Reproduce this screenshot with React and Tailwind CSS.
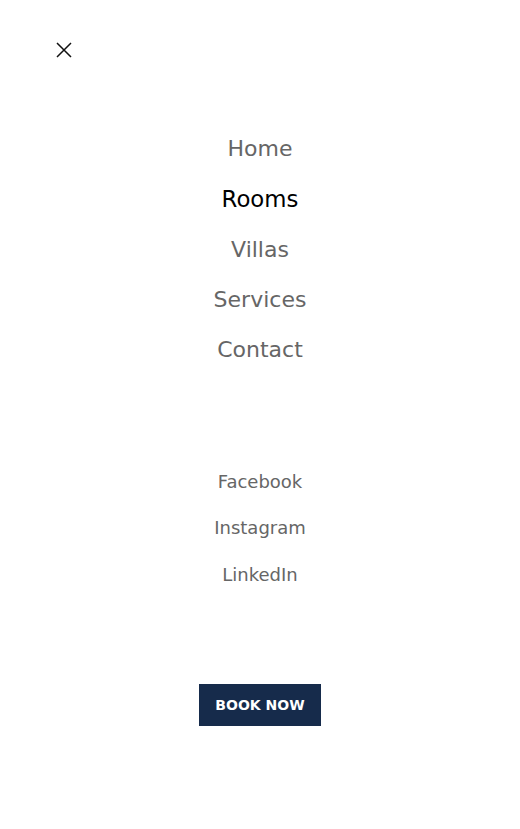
const navItems = ['Home', 'Rooms', 'Villas', 'Services', 'Contact'];
const socials = ['Facebook', 'Instagram', 'LinkedIn'];

const App = () => {
  return (
    <div
      className="min-h-[829px] w-full bg-white"
      style={{ fontFamily: '"DejaVu Sans", Verdana, sans-serif' }}
    >
      {/* close button */}
      <div className="h-[123.5px] pl-[55px] pt-[41px]">
        <button className="block h-[18px] w-[18px]" aria-label="Close menu">
          <svg viewBox="0 0 18 18" className="h-[18px] w-[18px]" fill="none" stroke="#111" strokeWidth="1.5">
            <path d="M2 2 L16 16 M16 2 L2 16" />
          </svg>
        </button>
      </div>

      {/* main nav */}
      <nav className="flex flex-col items-center">
        {navItems.map((item) => (
          <a
            key={item}
            href="#"
            className={`flex h-[50.25px] items-center ${
              item === 'Rooms' ? 'text-[22.8px] text-black' : 'text-[22px] text-[#666666]'
            }`}
          >
            {item}
          </a>
        ))}
      </nav>

      {/* socials */}
      <div className="mt-[83px] flex flex-col items-center">
        {socials.map((item) => (
          <a
            key={item}
            href="#"
            className="flex h-[46.5px] items-center text-[18px] text-[#666666]"
          >
            {item}
          </a>
        ))}
      </div>

      <div className="mt-[87px] flex justify-center">
        <button className="h-[42px] bg-[#162b4b] px-[16px] text-[14px] font-bold text-white">
          BOOK NOW
        </button>
      </div>
    </div>
  );
};

export default App;
